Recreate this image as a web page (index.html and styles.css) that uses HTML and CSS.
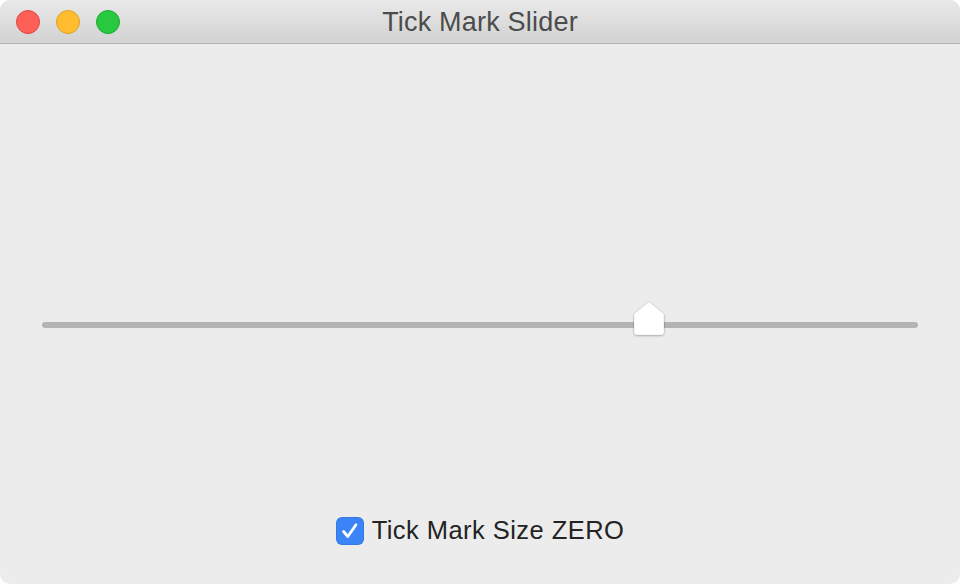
FILE: index.html
```html
<!DOCTYPE html>
<html>
<head>
<meta charset="utf-8">
<link rel="stylesheet" href="styles.css">
</head>
<body>
<div class="window">
  <div class="titlebar">
    <div class="lights">
      <span class="light red"></span>
      <span class="light yellow"></span>
      <span class="light green"></span>
    </div>
    <div class="title">Tick Mark Slider</div>
  </div>
  <div class="content">
    <div class="slider">
      <div class="track"></div>
      <svg class="knob" width="34" height="38" viewBox="0 0 34 38">
        <defs>
          <filter id="sh" x="-30%" y="-30%" width="160%" height="160%">
            <feDropShadow dx="0" dy="0.8" stdDeviation="0.8" flood-color="#000" flood-opacity="0.28"/>
          </filter>
        </defs>
        <path d="M17 2.2 Q17.8 2.2 18.6 3 L31.2 13.2 Q32 14 32 15.4 V32 Q32 35 29 35 H5 Q2 35 2 32 V15.4 Q2 14 2.8 13.2 L15.4 3 Q16.2 2.2 17 2.2 Z" fill="#fff" stroke="rgba(0,0,0,0.12)" stroke-width="0.6" filter="url(#sh)"/>
      </svg>
    </div>
    <label class="check">
      <span class="box">
        <svg width="28" height="28" viewBox="0 0 28 28"><path d="M7.5 14.5 L11.8 19.5 L20 7.8" fill="none" stroke="#fff" stroke-width="2.8" stroke-linecap="round" stroke-linejoin="round"/></svg>
      </span>
      <span class="label">Tick Mark Size ZERO</span>
    </label>
  </div>
</div>
</body>
</html>
```
FILE: styles.css
```css
html, body {
  margin: 0;
  padding: 0;
  background: #ffffff;
}
.window {
  width: 960px;
  height: 584px;
  background: #ececec;
  border-radius: 10px;
  overflow: hidden;
  display: flex;
  flex-direction: column;
  font-family: "Liberation Sans", Arial, sans-serif;
}
.titlebar {
  height: 43px;
  flex: none;
  position: relative;
  background: linear-gradient(#e9e9e9, #d2d2d2);
  border-bottom: 1px solid #b4b4b4;
  display: flex;
  align-items: center;
  justify-content: center;
}
.lights {
  position: absolute;
  left: 16px;
  top: 10px;
  display: flex;
  gap: 16px;
}
.light {
  width: 24px;
  height: 24px;
  border-radius: 50%;
  box-sizing: border-box;
}
.red { background: #fe5f57; border: 1px solid #e1463f; }
.yellow { background: #febc2e; border: 1px solid #dfa124; }
.green { background: #28c840; border: 1px solid #1eab2f; }
.title {
  font-size: 27px;
  color: #4c4c4c;
  letter-spacing: 0.2px;
  margin-top: 1px;
}
.content {
  flex: 1;
  display: flex;
  flex-direction: column;
  align-items: stretch;
}
.slider {
  position: relative;
  margin: 258px 42px 0 42px;
  height: 34px;
}
.track {
  margin-top: 20px;
  height: 6px;
  border-radius: 3px;
  background: #b4b4b4;
}
.knob {
  position: absolute;
  left: 590px;
  top: -2px;
}
.check {
  margin-top: 180px;
  display: flex;
  align-items: center;
  justify-content: center;
  gap: 8px;
}
.box {
  width: 28px;
  height: 28px;
  border-radius: 6px;
  background: #3a84f7;
  box-shadow: inset 0 0 0 1px rgba(0,0,0,0.08);
  display: flex;
}
.label {
  font-size: 25.5px;
  color: #232323;
  letter-spacing: 0.45px;
}
```
